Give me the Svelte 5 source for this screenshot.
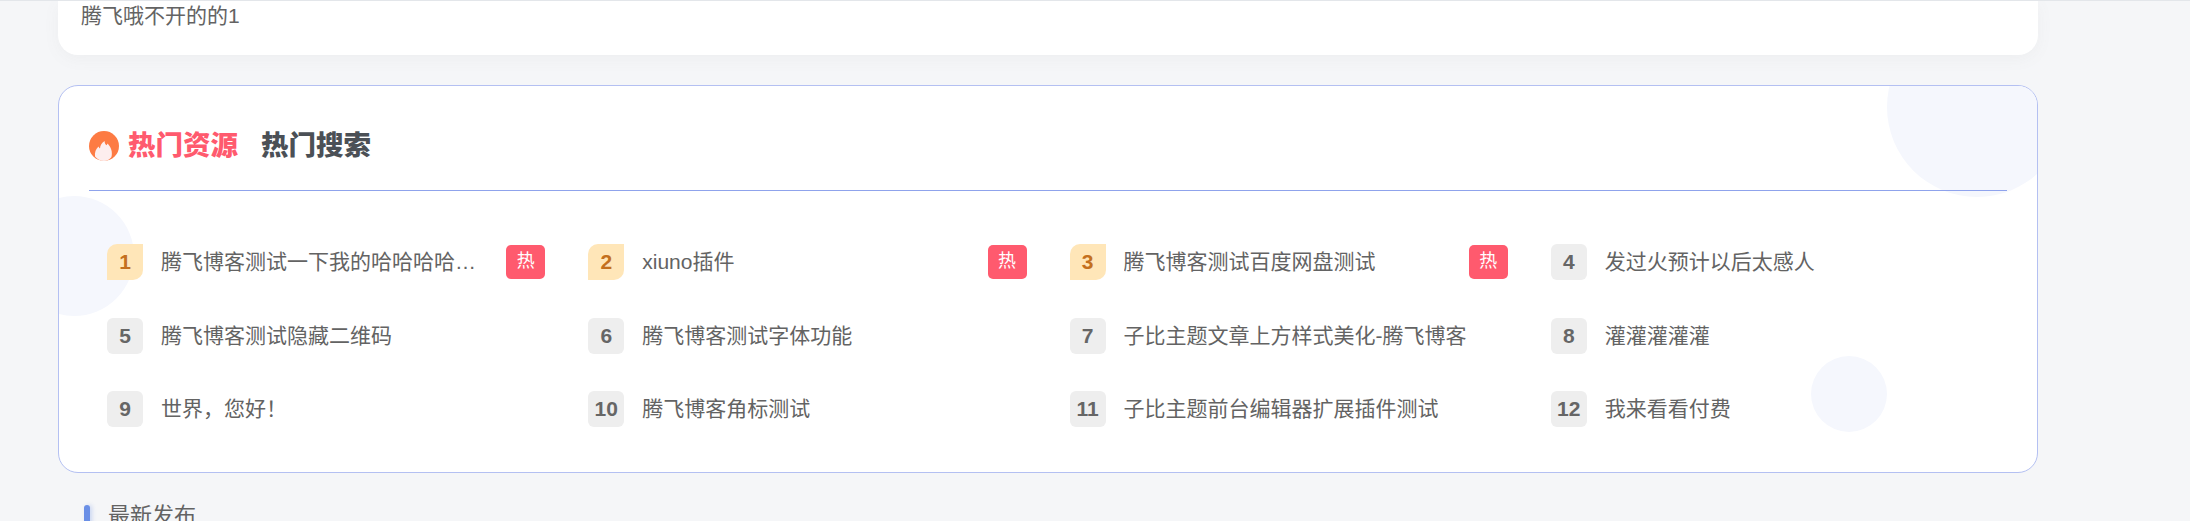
<script>
  const items = [
    { title: "腾飞博客测试一下我的哈哈哈哈哈哈哈哈哈", hot: true },
    { title: "xiuno插件", hot: true },
    { title: "腾飞博客测试百度网盘测试", hot: true },
    { title: "发过火预计以后太感人" },
    { title: "腾飞博客测试隐藏二维码" },
    { title: "腾飞博客测试字体功能" },
    { title: "子比主题文章上方样式美化-腾飞博客" },
    { title: "灌灌灌灌灌" },
    { title: "世界，您好！" },
    { title: "腾飞博客角标测试" },
    { title: "子比主题前台编辑器扩展插件测试" },
    { title: "我来看看付费" }
  ];
</script>

<div class="page">
  <div class="post">
    <p>腾飞哦不开的的1</p>
  </div>

  <section class="hot-card">
    <span class="blob blob-top"></span>
    <span class="blob blob-left"></span>
    <span class="blob blob-mid"></span>

    <header class="tabs">
      <svg class="flame" viewBox="0 0 30 30" aria-hidden="true">
        <circle cx="15" cy="15" r="15" fill="#fd7b43" />
        <path
          d="M6 25.500C5.400 21 7 18 9.500 15.500c.4 1 .9 1.700 1.500 2 .2-3 1.700-6 4.600-7.500-.1 2 .7 3.300 1.900 4.300.5-.5.800-1.100.9-1.800 2.800 2.700 5 6.600 4.400 11.500-.1.900-.3 1.700-.5 2.300C20.500 28.700 18 30 15 30c-3.500 0-7-1.800-9-4.500z"
          fill="#fdeeee" />
      </svg>
      <h2 class="tab active">热门资源</h2>
      <h2 class="tab">热门搜索</h2>
    </header>

    <ul class="list">
      {#each items as item, i}
        <li class="item">
          <span class="num" class:top={i < 3}>{i + 1}</span>
          <span class="title">{item.title}</span>
          {#if item.hot}<span class="hot">热</span>{/if}
        </li>
      {/each}
    </ul>
  </section>

  <h3 class="latest">最新发布</h3>
</div>

<style>
  :global(body) {
    margin: 0;
    background: #f5f6f8;
  }

  .page {
    height: 521px;
    overflow: hidden;
    padding-left: 58px;
    border-top: 1px solid #e3e6ea;
    box-sizing: border-box;
    font-family: "Liberation Sans", "Noto Sans CJK SC", sans-serif;
    color: #636363;
  }

  .post {
    width: 1980px;
    height: 54px;
    box-sizing: border-box;
    padding-left: 23px;
    background: #fff;
    border-radius: 0 0 20px 20px;
    box-shadow: 0 4px 16px rgba(116, 116, 116, 0.06);
  }

  .post p {
    margin: 0;
    font-size: 21px;
    line-height: 30px;
    color: #636363;
  }

  .hot-card {
    position: relative;
    overflow: hidden;
    width: 1980px;
    height: 388px;
    margin-top: 30px;
    box-sizing: border-box;
    padding: 0 30px;
    background: #fff;
    border: 1px solid #b4c0f2;
    border-radius: 20px;
  }

  .blob {
    position: absolute;
    border-radius: 50%;
    background: #f5f7fd;
  }

  .blob-top {
    width: 180px;
    height: 180px;
    top: -69px;
    right: -30px;
  }

  .blob-left {
    width: 120px;
    height: 120px;
    top: 110px;
    left: -45px;
  }

  .blob-mid {
    width: 76px;
    height: 76px;
    top: 270px;
    right: 150px;
  }

  .tabs {
    position: relative;
    display: flex;
    align-items: center;
    height: 105px;
    padding-top: 15px;
    box-sizing: border-box;
    border-bottom: 1px solid #8fa3ec;
  }

  .flame {
    width: 30px;
    height: 30px;
    margin-right: 9px;
  }

  .tab {
    margin: 0 23px 0 0;
    font-size: 27.500px;
    line-height: 30px;
    font-weight: 900;
    color: #4b5056;
  }

  .tab.active {
    color: #ff5a6e;
  }

  .list {
    position: relative;
    display: grid;
    grid-template-columns: repeat(4, 1fr);
    column-gap: 43px;
    row-gap: 37.500px;
    margin: 0;
    padding: 53px 18px 0;
    list-style: none;
  }

  .item {
    display: flex;
    align-items: center;
    height: 36px;
    min-width: 0;
  }

  .num {
    flex: none;
    width: 36px;
    height: 36px;
    margin-right: 18px;
    border-radius: 6px;
    background: #eee;
    color: #666;
    font-size: 21px;
    font-weight: 700;
    line-height: 36px;
    text-align: center;
  }

  .num.top {
    background: #ffe6b8;
    color: #c4701e;
    border-radius: 10px 0 10px 0;
  }

  .title {
    flex: 1;
    min-width: 0;
    overflow: hidden;
    white-space: nowrap;
    text-overflow: ellipsis;
    font-size: 21px;
    line-height: 30px;
  }

  .hot {
    flex: none;
    width: 39px;
    height: 34px;
    margin-left: 25px;
    border-radius: 5px;
    background: #ff5a6e;
    color: #fff;
    font-size: 18px;
    line-height: 32px;
    text-align: center;
  }

  .latest {
    position: relative;
    margin: 28px 0 0 50px;
    font-size: 22px;
    font-weight: 400;
    line-height: 30px;
    color: #636363;
  }

  .latest::before {
    content: "";
    position: absolute;
    left: -24px;
    top: 4px;
    width: 6px;
    height: 30px;
    border-radius: 3px;
    background: #6a8fe6;
    box-shadow: 2px 0 4px rgba(106, 143, 230, 0.3);
  }
</style>
